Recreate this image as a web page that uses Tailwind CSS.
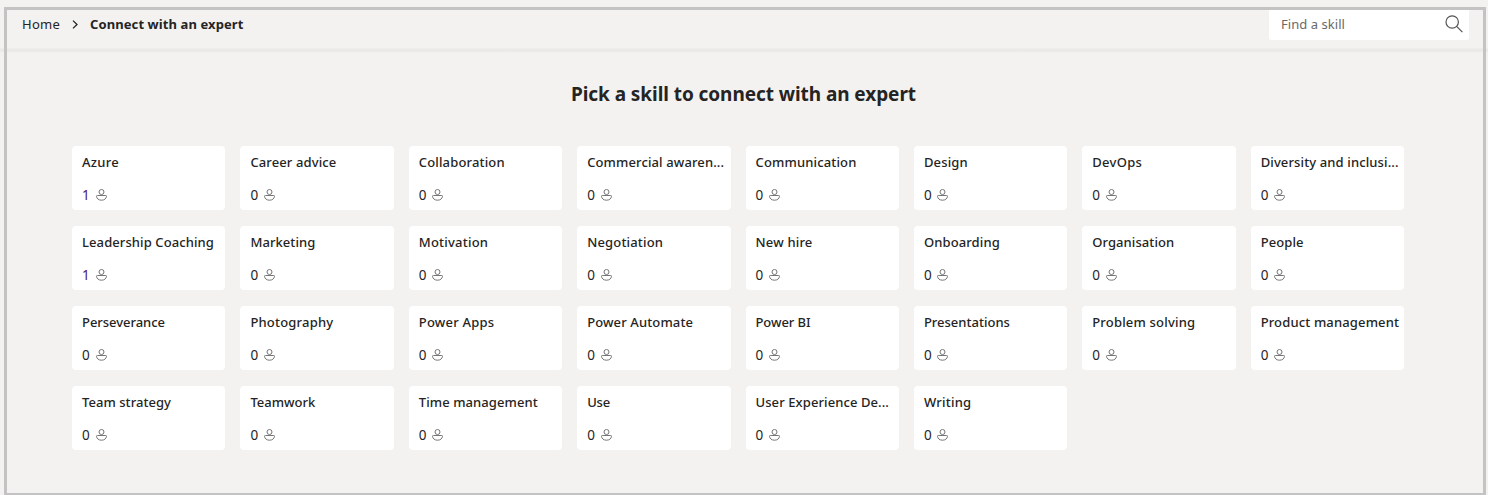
<!DOCTYPE html>
<html lang="en">
<head>
<meta charset="utf-8">
<title>Connect with an expert</title>
<script src="https://cdn.jsdelivr.net/npm/@tailwindcss/browser@4"></script>
</head>
<body class="relative h-[495px] overflow-hidden bg-[#f3f2f1] font-['Noto_Sans',sans-serif] text-[#252423]">
<header class="flex h-[48px] items-start justify-between pl-[22px] pr-[19px]">
  <nav class="flex items-center pt-[14px] text-[13px] leading-[20px]">
    <span class="w-[50px] whitespace-nowrap"><span data-w="38" data-f="400 13px">Home</span></span>
    <svg class="mr-[11px] h-[9px] w-[7px]" viewBox="0 0 7 9" fill="none" stroke="#252423" stroke-width="1.3"><path d="M1 .6 5 4.5 1 8.4"/></svg>
    <span class="whitespace-nowrap font-bold"><span data-w="153.5" data-f="700 13px">Connect with an expert</span></span>
  </nav>
  <div class="mt-[8px] flex h-[32px] w-[200px] items-center rounded-[2px] bg-white pl-[12px] pr-[6px] text-[13px] text-[#6b6967]">
    <span class="flex-1 whitespace-nowrap pt-px"><span data-w="64" data-f="400 13px">Find a skill</span></span>
    <svg class="h-[18px] w-[18px]" viewBox="0 0 18 18" fill="none" stroke="#555" stroke-width="1.2"><circle cx="7.2" cy="7" r="6.2"/><path d="m11.6 11.4 5.8 5.8"/></svg>
  </div>
</header>
<div class="h-[5px] bg-linear-to-b from-[#efeeed] via-[#e9e8e7] to-[#f3f2f1]"></div>
<main class="pl-[72px] pr-[84px]">
  <h1 class="pt-[27px] pl-[499px] whitespace-nowrap text-[19px] font-bold leading-[28px]"><span data-w="345" data-f="700 19px">Pick a skill to connect with an expert</span></h1>
  <div id="grid" class="mt-[38px] grid grid-cols-8 gap-x-[15px] gap-y-[16px]"></div>
</main>
<div class="pointer-events-none absolute left-[4px] top-[7px] h-[488px] w-[1482px] border-3 border-b-2 border-[#c3c3c3]"></div>
<script>
const skills = [
 ["Azure",1,37],["Career advice",0,86],["Collaboration",0,86],["Commercial awaren...",0,137],["Communication",0,101],["Design",0,44],["DevOps",0,50],["Diversity and inclusi...",0,138],
 ["Leadership Coaching",1,132],["Marketing",0,65],["Motivation",0,69.5],["Negotiation",0,76],["New hire",0,57],["Onboarding",0,76],["Organisation",0,82],["People",0,43],
 ["Perseverance",0,83],["Photography",0,83],["Power Apps",0,75.5],["Power Automate",0,106],["Power BI",0,55],["Presentations",0,86],["Problem solving",0,103],["Product management",0,138.5],
 ["Team strategy",0,89],["Teamwork",0,65],["Time management",0,119],["Use",0,23],["User Experience De...",0,133.5],["Writing",0,47.5]];
document.getElementById('grid').innerHTML = skills.map(([name, n, w]) => `
<a class="h-[64px] rounded-[4px] bg-white pl-[10px]">
  <div class="whitespace-nowrap pt-[6px] text-[13px] font-medium leading-[20px]"><span data-w="${w}" data-f="500 13px">${name}</span></div>
  <div class="mt-[13px] flex items-center gap-[5.5px] text-[13.5px] leading-[20px] ${n ? 'text-[#4b1a75]' : ''}"><span class="w-[8px]">${n}</span>
  <svg class="h-[14px] w-[11px]" viewBox="0 0 11 14" fill="none" stroke="#757575" stroke-width="1"><circle cx="5.5" cy="4" r="2.5"/><path d="M1.3 7.5h8.4q.8 0 .8.8C10.300 10.700 8.300 12.200 5.500 12.200S.700 10.700.500 8.300q0-.8.8-.8Z"/></svg></div>
</a>`).join('');
/* Fit each label to its intended width by spreading the difference over the letters. */
const ctx = document.createElement('canvas').getContext('2d');
document.querySelectorAll('[data-w]').forEach(e => {
  ctx.font = e.dataset.f + ' "Noto Sans"';
  const d = +e.dataset.w - ctx.measureText(e.textContent).width;
  e.style.letterSpacing = (d / e.textContent.length) + 'px';
});
</script>
</body>
</html>
